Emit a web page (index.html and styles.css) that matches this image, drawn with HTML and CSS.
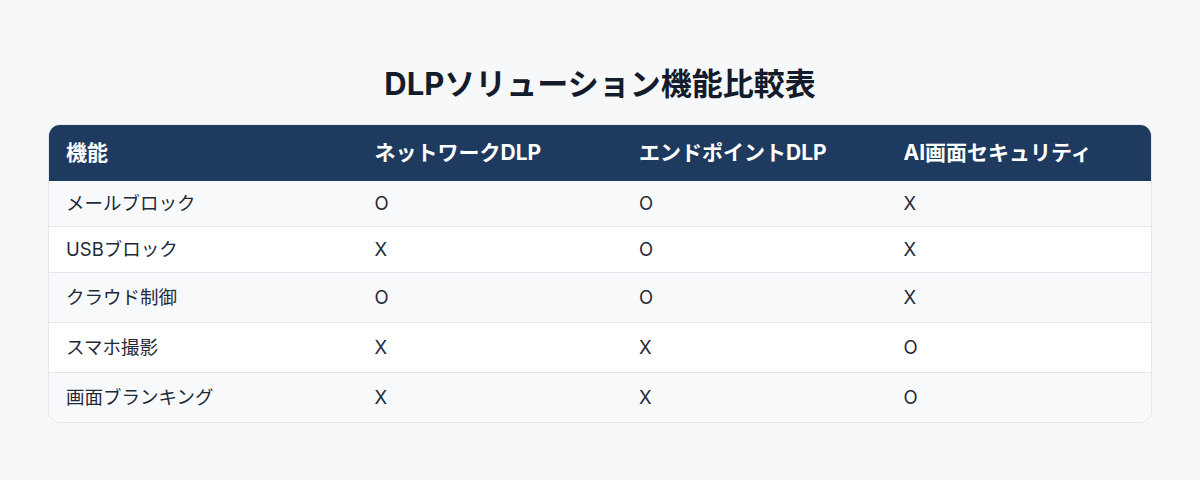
FILE: index.html
```html
<!DOCTYPE html>
<html lang="ja">
<head>
<meta charset="utf-8">
<title>DLPソリューション機能比較表</title>
<link rel="stylesheet" href="styles.css">
</head>
<body>
<main class="page">
  <h1 class="title">DLPソリューション機能比較表</h1>
  <div class="table-wrap">
    <table class="compare">
      <colgroup>
        <col class="col-feature">
        <col class="col-value">
        <col class="col-value">
        <col class="col-value">
      </colgroup>
      <thead>
        <tr>
          <th>機能</th>
          <th>ネットワークDLP</th>
          <th>エンドポイントDLP</th>
          <th>AI画面セキュリティ</th>
        </tr>
      </thead>
      <tbody>
        <tr class="row">
          <td>メールブロック</td><td>O</td><td>O</td><td>X</td>
        </tr>
        <tr class="row">
          <td>USBブロック</td><td>X</td><td>O</td><td>X</td>
        </tr>
        <tr class="row row-tall">
          <td>クラウド制御</td><td>O</td><td>O</td><td>X</td>
        </tr>
        <tr class="row row-tall">
          <td>スマホ撮影</td><td>X</td><td>X</td><td>O</td>
        </tr>
        <tr class="row row-tall">
          <td>画面ブランキング</td><td>X</td><td>X</td><td>O</td>
        </tr>
      </tbody>
    </table>
  </div>
</main>
</body>
</html>
```
FILE: styles.css
```css
html, body {
  margin: 0;
  padding: 0;
}
body {
  background: #f7f8fa;
  font-family: Inter, "Noto Sans CJK JP", sans-serif;
  color: #1f2937;
}
.page {
  padding: 64px 48px 40px;
}
.title {
  margin: 0 0 20px;
  text-align: center;
  font-size: 31px;
  line-height: 40px;
  font-weight: 700;
  color: #141b2b;
}
.table-wrap {
  border: 1px solid #e3e6eb;
  border-radius: 12px;
  overflow: hidden;
  background: #ffffff;
}
.compare {
  width: 100%;
  border-collapse: collapse;
  table-layout: fixed;
}
.col-feature { width: 28%; }
.col-value { width: 24%; }
.compare th {
  background: #1f3a5f;
  color: #ffffff;
  text-align: left;
  font-size: 21px;
  font-weight: 700;
  line-height: 24px;
  padding: 16px 17px;
}
.compare td {
  font-size: 18.5px;
  line-height: 21px;
  padding: 12px 17px;
  text-align: left;
  border-top: 1px solid #e3e6eb;
}
.compare tbody .row:first-child td {
  border-top: none;
}
.compare tbody .row:nth-child(odd) {
  background: #f8f9fb;
}
.compare tbody .row:nth-child(even) {
  background: #ffffff;
}
.compare .row-tall td {
  padding-top: 14px;
  padding-bottom: 14px;
}
```
